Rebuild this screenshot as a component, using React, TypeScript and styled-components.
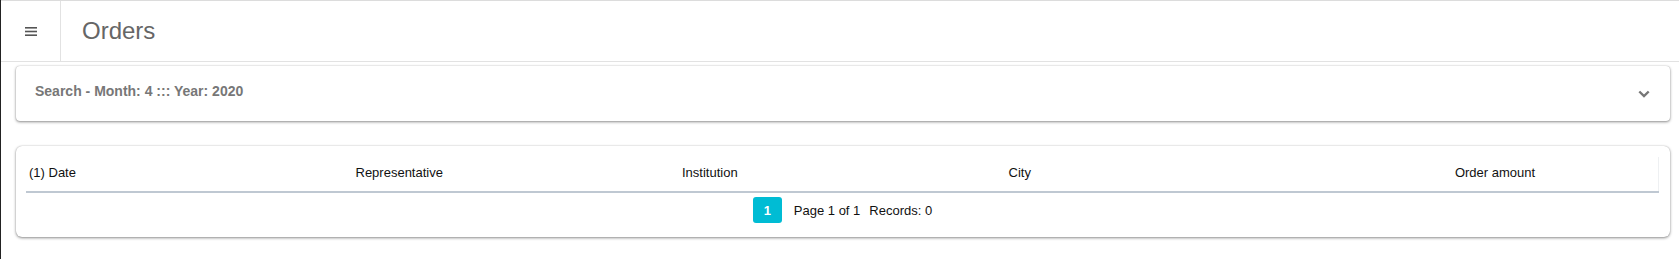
import React from 'react';
import styled, { createGlobalStyle } from 'styled-components';

const GlobalStyle = createGlobalStyle`
  html, body {
    margin: 0;
    padding: 0;
    background: #fff;
    font-family: 'Liberation Sans', Arial, sans-serif;
  }
`;

const Page = styled.div`
  min-height: 259px;
  border-left: 1px solid #222;
  box-sizing: border-box;
`;

const Header = styled.header`
  display: flex;
  height: 60px;
  border-top: 1px solid #dcdcdc;
  border-bottom: 1px solid #e2e2e2;
`;

const MenuCell = styled.div`
  width: 59px;
  display: flex;
  align-items: center;
  justify-content: center;
  border-right: 1px solid #e2e2e2;
`;

const Title = styled.h1`
  margin: 0;
  padding-left: 21px;
  display: flex;
  align-items: center;
  font-size: 24px;
  font-weight: 400;
  color: #666;
`;

const Content = styled.main`
  padding: 4px 9px 0 15px;
`;

const Card = styled.section<{ radius?: number }>`
  background: #fff;
  border-radius: ${(p) => p.radius ?? 4}px;
  box-shadow: 0 1px 3px rgba(0, 0, 0, 0.45), 0 0 1px rgba(0, 0, 0, 0.25);
`;

const SearchBar = styled(Card)`
  height: 55px;
  display: flex;
  align-items: center;
  justify-content: space-between;
  padding: 0 20px 0 19px;
  box-sizing: border-box;
`;

const SearchLabel = styled.span`
  font-size: 14px;
  font-weight: 700;
  color: #777;
  margin-top: -5px;
`;

const TableCard = styled(Card)`
  margin-top: 25px;
  padding: 11px 11px 14px 10px;
`;

const Table = styled.table`
  width: 100%;
  border-collapse: collapse;
  table-layout: fixed;
`;

const Th = styled.th<{ align?: string; last?: boolean }>`
  height: 35px;
  padding: 0 3px 3px;
  text-align: ${(p) => p.align ?? 'left'};
  font-size: 13px;
  font-weight: 400;
  color: #111;
  border-bottom: 2px solid #bfc8d2;
  border-right: ${(p) => (p.last ? '1px solid #eef0f2' : 'none')};
  box-sizing: border-box;
`;

const Pager = styled.div`
  display: flex;
  justify-content: center;
  align-items: center;
  gap: 12px;
  padding-top: 4px;
  font-size: 13px;
  color: #111;
`;

const PageButton = styled.span`
  width: 29px;
  height: 26px;
  display: flex;
  align-items: center;
  justify-content: center;
  border-radius: 3px;
  background: #00bcd4;
  color: #fff;
  font-weight: 700;
  font-size: 13px;
`;

const PagerText = styled.span`
  & + & {
    margin-left: -3px;
  }
`;

const Hamburger = () => (
  <svg width="12" height="9" viewBox="0 0 12 9">
    <rect x="0" y="0" width="12" height="1.6" fill="#555" />
    <rect x="0" y="3.7" width="12" height="1.6" fill="#555" />
    <rect x="0" y="7.4" width="12" height="1.6" fill="#555" />
  </svg>
);

const Chevron = () => (
  <svg width="12" height="8" viewBox="0 0 12 8">
    <path d="M1.3 1.5 L6 6 L10.7 1.5" fill="none" stroke="#777" strokeWidth="2.4" />
  </svg>
);

const columns = ['(1) Date', 'Representative', 'Institution', 'City'];

export default function App() {
  return (
    <Page>
      <GlobalStyle />
      <Header>
        <MenuCell>
          <Hamburger />
        </MenuCell>
        <Title>Orders</Title>
      </Header>
      <Content>
        <SearchBar>
          <SearchLabel>Search - Month: 4 ::: Year: 2020</SearchLabel>
          <Chevron />
        </SearchBar>
        <TableCard radius={6}>
          <Table>
            <thead>
              <tr>
                {columns.map((c) => (
                  <Th key={c}>{c}</Th>
                ))}
                <Th align="center" last>
                  Order amount
                </Th>
              </tr>
            </thead>
          </Table>
          <Pager>
            <PageButton>1</PageButton>
            <PagerText>Page 1 of 1</PagerText>
            <PagerText>Records: 0</PagerText>
          </Pager>
        </TableCard>
      </Content>
    </Page>
  );
}
